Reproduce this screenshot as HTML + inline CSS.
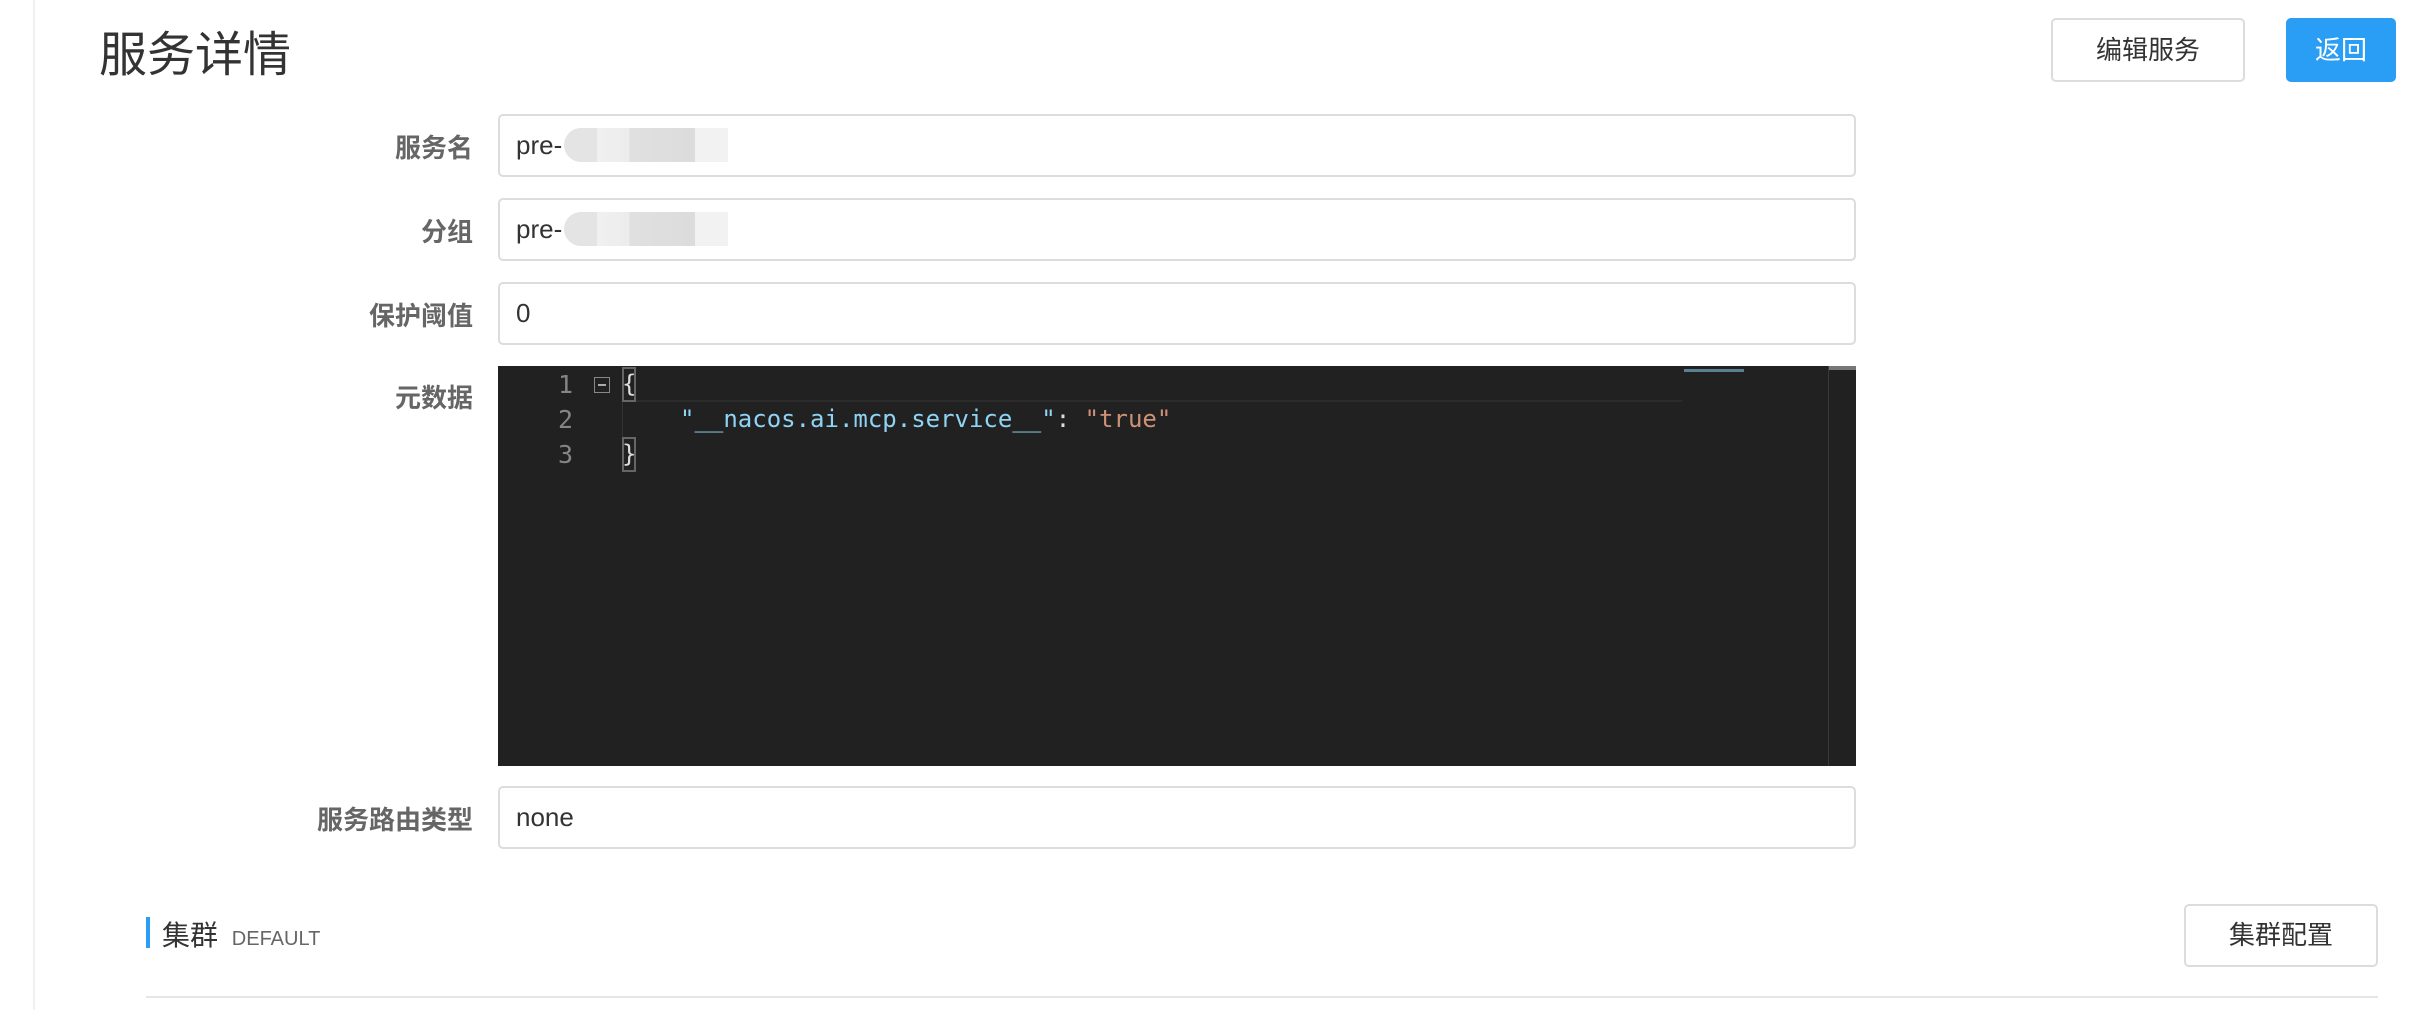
<!DOCTYPE html>
<html><head><meta charset="utf-8"><style>
*{margin:0;padding:0;box-sizing:border-box}
body{width:2414px;height:1010px;background:#fff;position:relative;overflow:hidden;font-family:"Liberation Sans","Noto Sans CJK SC",sans-serif;color:#333}
.a{position:absolute}
.vline{left:33px;top:0;width:2px;height:1010px;background:#f0f0f0}
.title{left:99px;top:26px;font-size:48px;color:#333;line-height:60px}
.lbl{right:1941px;font-size:26px;color:#666;font-weight:bold;line-height:30px;text-align:right;white-space:nowrap}
.inp{left:498px;width:1358px;height:63px;border:2px solid #dcdcdc;border-radius:5px;background:#fff;font-size:26px;line-height:59px;padding-left:16px;color:#333}
.blur{position:absolute;left:64px;top:12px;width:164px;height:34px;border-radius:17px 0 0 17px;background:linear-gradient(90deg,#e4e4e4 0,#e4e4e4 20%,#f0f0f0 20%,#ececec 40%,#e0e0e0 40%,#dcdcdc 80%,#f2f2f2 80%)}
.btn{border:2px solid #dcdcdc;border-radius:5px;background:#fff;font-size:26px;text-align:center;color:#333}
.ed{left:498px;top:366px;width:1358px;height:400px;background:#212121;font-family:"DejaVu Sans Mono","Liberation Mono",monospace;font-size:24px}
.ln{position:absolute;left:50px;width:30px;color:#858585;line-height:35px;font-size:25px}
.cl{position:absolute;line-height:35px;white-space:pre}
</style></head><body>
<div class="a vline"></div>
<div class="a title">服务详情</div>
<div class="a btn" style="left:2051px;top:18px;width:194px;height:64px;line-height:60px">编辑服务</div>
<div class="a btn" style="left:2286px;top:18px;width:110px;height:64px;line-height:60px;background:#2a9df4;border-color:#2a9df4;color:#fff">返回</div>

<div class="a lbl" style="top:133px">服务名</div>
<div class="a inp" style="top:114px">pre-<div class="blur"></div></div>
<div class="a lbl" style="top:217px">分组</div>
<div class="a inp" style="top:198px">pre-<div class="blur"></div></div>
<div class="a lbl" style="top:301px">保护阈值</div>
<div class="a inp" style="top:282px">0</div>
<div class="a lbl" style="top:383px">元数据</div>
<div class="a ed">
 <div style="position:absolute;left:124px;top:34px;width:1060px;height:2px;background:#2c2c2c"></div>
 <div style="position:absolute;left:124px;top:35px;width:1px;height:70px;background:#333"></div>
 <div class="ln" style="top:1px;left:60px">1</div>
 <div class="ln" style="top:36px;left:60px">2</div>
 <div class="ln" style="top:71px;left:60px">3</div>
 <div style="position:absolute;left:96px;top:11px;width:16px;height:16px;border:1px solid #888"><div style="position:absolute;left:3px;top:6px;width:8px;height:2px;background:#aaa"></div></div>
 <div class="cl" style="left:124px;top:1px;color:#ddd;outline:2px solid #666;outline-offset:-2px;width:14px">{</div>
 <div class="cl" style="left:182px;top:36px;color:#8fd3f5">"__nacos.ai.mcp.service__"<span style="color:#ddd">: </span><span style="color:#ce9178">"true"</span></div>
 <div class="cl" style="left:124px;top:71px;color:#ddd;outline:2px solid #666;outline-offset:-2px;width:14px">}</div>
 <div style="position:absolute;left:1186px;top:3px;width:60px;height:3px;background:#5a7f94"></div>
 <div style="position:absolute;left:1330px;top:0;width:1px;height:400px;background:#3a3a3a"></div>
 <div style="position:absolute;left:1331px;top:0;width:27px;height:4px;background:#777"></div>
</div>

<div class="a lbl" style="top:805px">服务路由类型</div>
<div class="a inp" style="top:786px">none</div>

<div class="a" style="left:146px;top:917px;width:4px;height:31px;background:#2a9df4"></div>
<div class="a" style="left:162px;top:918px;font-size:28px;line-height:36px;color:#333">集群 <span style="font-size:20px;color:#666;margin-left:6px">DEFAULT</span></div>
<div class="a btn" style="left:2184px;top:904px;width:194px;height:63px;line-height:59px">集群配置</div>
<div class="a" style="left:146px;top:996px;width:2232px;height:2px;background:#e6e6e6"></div>
</body></html>
